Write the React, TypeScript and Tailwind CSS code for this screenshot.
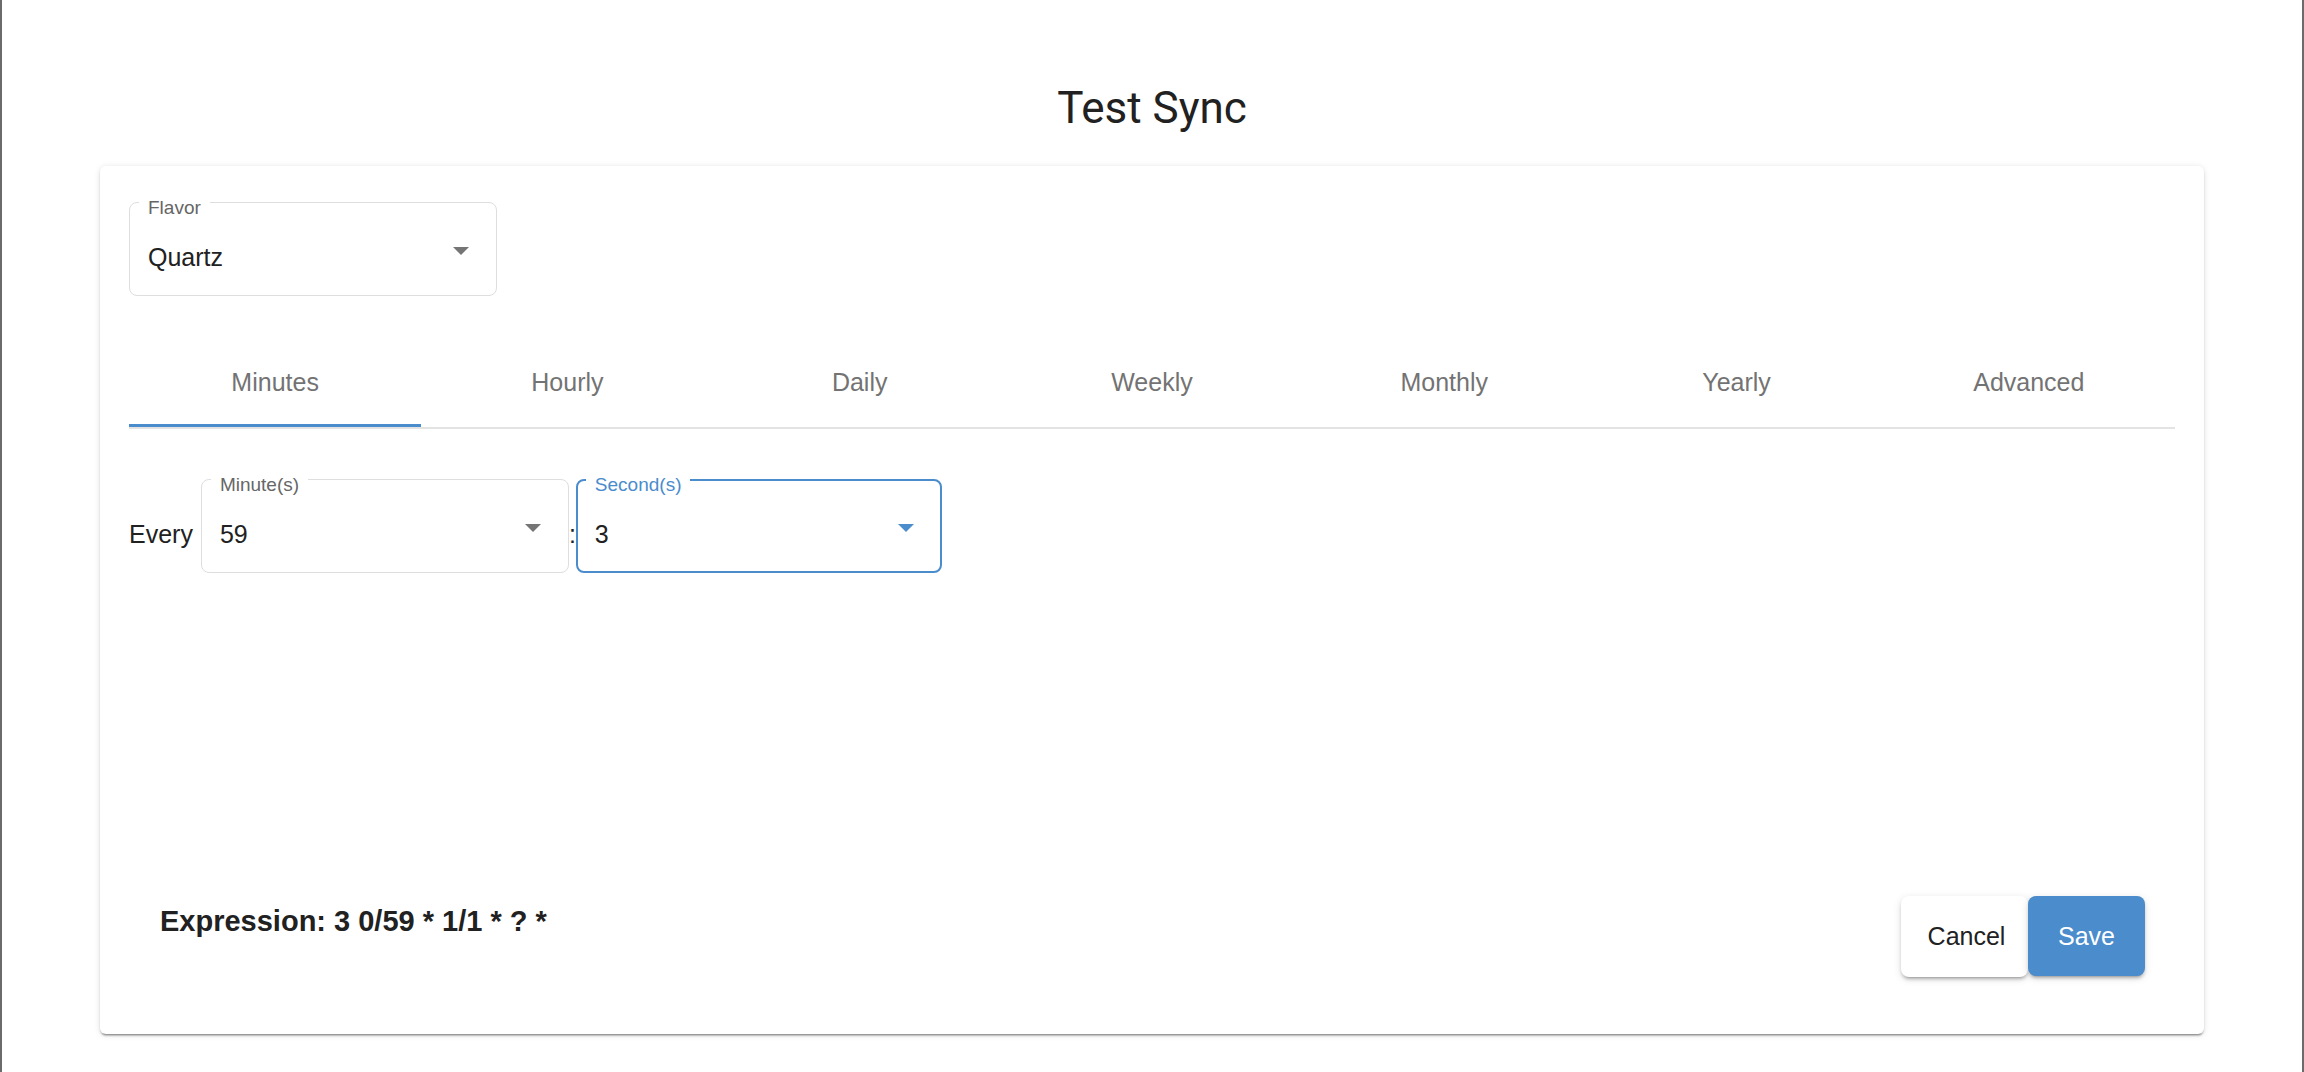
import { useState } from 'react';

const tabs = ['Minutes', 'Hourly', 'Daily', 'Weekly', 'Monthly', 'Yearly', 'Advanced'];

function Arrow({ color }: { color: string }) {
  return (
    <svg width="16" height="8" viewBox="0 0 16 8" className="mt-[4px] shrink-0">
      <path d="M0 0 L16 0 L8 8 Z" fill={color} />
    </svg>
  );
}

function OutlinedSelect({
  label,
  value,
  width,
  focused = false,
}: {
  label: string;
  value: string;
  width: string;
  focused?: boolean;
}) {
  return (
    <div
      className={
        focused
          ? `relative flex h-[94px] items-center justify-between rounded-lg border-2 border-[#4a8ccc] pl-[17px] pr-[26px] ${width}`
          : `relative flex h-[94px] items-center justify-between rounded-lg border border-[#dedede] pl-[18px] pr-[27px] ${width}`
      }
    >
      {/* notched label sitting on the border */}
      <span
        className={
          focused
            ? 'absolute left-[8px] top-[-6px] bg-white px-[9px] text-[19px] leading-none text-[#4a8ccc]'
            : 'absolute left-[9px] top-[-5px] bg-white px-[9px] text-[19px] leading-none text-[#666666]'
        }
      >
        {label}
      </span>
      <span className="pt-[17px] text-[25px] leading-none text-[#212121]">{value}</span>
      <Arrow color={focused ? '#4a8ccc' : '#757575'} />
    </div>
  );
}

export default function App() {
  const [active, setActive] = useState(0);

  return (
    <div className="h-[1072px] w-full border-x-2 border-[#6b6b6b] bg-white font-['Liberation_Sans',Arial,sans-serif]">
      <h1 className="pt-[86px] text-center font-['Roboto',sans-serif] text-[44px] font-normal leading-none text-[#212121]">
        Test Sync
      </h1>

      <div className="mx-[98px] mt-[36px] flex h-[868px] flex-col rounded-md bg-white px-[29px] pt-[36px] shadow-[0_3px_2px_-2px_rgba(0,0,0,0.35),0_2px_2px_0_rgba(0,0,0,0.14),0_1px_6px_0_rgba(0,0,0,0.12)]">
        <OutlinedSelect label="Flavor" value="Quartz" width="w-[368px]" />

        {/* tabs */}
        <div className="mt-[44px] flex border-b-2 border-[#e3e3e3]">
          {tabs.map((t, i) => (
            <button key={t} onClick={() => setActive(i)} className="flex flex-1 flex-col">
              <span className="flex h-[84px] items-center justify-center text-[25px] leading-none text-[#737373]">
                {t}
              </span>
              <span className={i === active ? 'h-[3px] w-full bg-[#4a8ccc]' : 'h-[3px] w-full'} />
            </button>
          ))}
        </div>

        <div className="mt-[50px] flex items-center">
          <span className="mr-[8px] mt-[16px] text-[25px] leading-none text-[#212121]">Every</span>
          <OutlinedSelect label="Minute(s)" value="59" width="w-[368px]" />
          <span className="mt-[16px] text-[25px] leading-none text-[#212121]">:</span>
          <OutlinedSelect label="Second(s)" value="3" width="w-[366px]" focused />
        </div>

        <div className="flex-1" />

        <div className="flex items-start justify-between pb-[57px] pl-[31px] pr-[30px]">
          <p className="mt-[11px] text-[29px] font-bold leading-none text-[#212121]">
            Expression: 3 0/59 * 1/1 * ? *
          </p>
          <div className="flex items-start">
            <button className="flex h-[81px] w-[127px] items-center justify-center rounded-lg bg-white pl-[4px] text-[25px] leading-none text-[#212121] shadow-[0_4px_2px_-3px_rgba(0,0,0,0.2),0_3px_3px_0_rgba(0,0,0,0.14),0_2px_8px_0_rgba(0,0,0,0.12)]">
              Cancel
            </button>
            <button className="flex h-[80px] w-[117px] items-center justify-center rounded-lg bg-[#4a8ccc] text-[25px] leading-none text-white shadow-[0_4px_2px_-3px_rgba(0,0,0,0.2),0_3px_3px_0_rgba(0,0,0,0.14),0_2px_8px_0_rgba(0,0,0,0.12)]">
              Save
            </button>
          </div>
        </div>
      </div>
    </div>
  );
}
